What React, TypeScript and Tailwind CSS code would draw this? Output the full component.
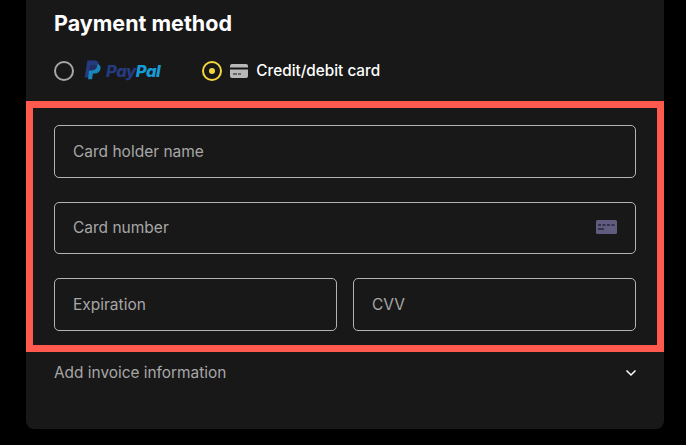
import React from 'react';

const font = { fontFamily: 'Inter, sans-serif' };

const PayPalMark = () => (
  <svg width="17" height="20" viewBox="0 0 18 21" className="block">
    <path d="M3.6 0.5h7.2c3.4 0 5.4 1.9 4.9 5-.6 3.700-3.200 5.500-6.700 5.500H6.300l-1.200 7.500H0.700z" fill="#253b80" />
    <path d="M6.200 4.500h7.400c2.700 0 4.400 1.700 3.900 4.600-.5 3.300-2.900 5.200-6 5.200H9.400l-.9 5.900H4.300z" fill="#179bd7" opacity="0.85" />
    <path d="M6.200 4.500h7.900c.5 3.700-2.200 6.500-6 6.500H5.100z" fill="#222d65" />
  </svg>
);

const CardIcon = () => (
  <svg viewBox="0 0 18 14" className="ml-[8px] w-[18px] h-[14px] text-[#b8b8b8]">
    <path
      fillRule="evenodd"
      d="M2 0h14a2 2 0 0 1 2 2v1.500H0V2a2 2 0 0 1 2-2zM0 5.500h18V12a2 2 0 0 1-2 2H2a2 2 0 0 1-2-2zM3 9.500v1h4v-1zM8 9.500v1h3v-1z"
      fill="currentColor"
    />
  </svg>
);

const CardNumberIcon = () => (
  <svg width="21" height="14" viewBox="0 0 21 14" className="mt-[-1px]">
    <rect width="21" height="14" rx="1.500" fill="#5f5c80" />
    <path d="M2 5h3M6.500 5h3M11 5h3M15.500 5h3M2 9h6" stroke="#25243a" strokeWidth="1.500" />
  </svg>
);

const Field = ({ label, icon, className = '' }: { label: string; icon?: React.ReactNode; className?: string }) => (
  <div className={`h-[52.500px] flex items-center justify-between pl-[18px] pr-[18px] border border-[#b3b3b3] rounded-[5px] ${className}`}>
    <span className="text-[15.500px] leading-[24px] pt-[1px] text-[#a7a7a7]">{label}</span>
    {icon}
  </div>
);

const App: React.FC = () => {
  return (
    <div className="w-[686px] h-[445px] bg-black overflow-hidden pl-[26px]" style={font}>
      <div className="w-[638px] h-[429px] bg-[#181818] rounded-b-lg flex flex-col">
        <div className="px-[28px] pt-[8px]">
          <h2 className="text-[21.500px] leading-[30px] font-bold text-white">Payment method</h2>

          <div className="flex items-center mt-[21px] h-[24px]">
            <span className="w-[20px] h-[20px] rounded-full border-2 border-[#a7a7a7]" />
            <span className="ml-[10px] mb-[2px]"><PayPalMark /></span>
            <span className="ml-[5px] text-[16.500px] font-extrabold italic tracking-tight">
              <span className="text-[#253b80]">Pay</span>
              <span className="text-[#179bd7]">Pal</span>
            </span>
            <span className="ml-[42px] w-[20px] h-[20px] rounded-full border-2 border-[#f5d63d] flex items-center justify-center">
              <span className="w-[6px] h-[6px] rounded-full bg-[#f5d63d]" />
            </span>
            <CardIcon />
            <span className="ml-[8px] text-[15.300px] font-medium text-white">Credit/debit card</span>
          </div>
        </div>

        <div className="mt-[18px] h-[251px] border-[7px] border-[#ff5a4d] px-[21px] pt-[17px] flex flex-col gap-[24px]">
          <Field label="Card holder name" />
          <Field label="Card number" icon={<CardNumberIcon />} />
          <div className="flex gap-[16px]">
            <Field label="Expiration" className="flex-1" />
            <Field label="CVV" className="flex-1" />
          </div>
        </div>

        <div className="px-[28px] pt-[10px] flex items-center justify-between">
          <span className="text-[15.400px] leading-[22px] text-[#a7a7a7]">Add invoice information</span>
          <svg width="12" height="8" viewBox="0 0 12 8" fill="none" stroke="#ffffff" strokeWidth="1.500" className="mr-[-1px]">
            <path d="M1.500 1.500L6 6l4.500-4.500" />
          </svg>
        </div>
      </div>
    </div>
  );
};

export default App;
